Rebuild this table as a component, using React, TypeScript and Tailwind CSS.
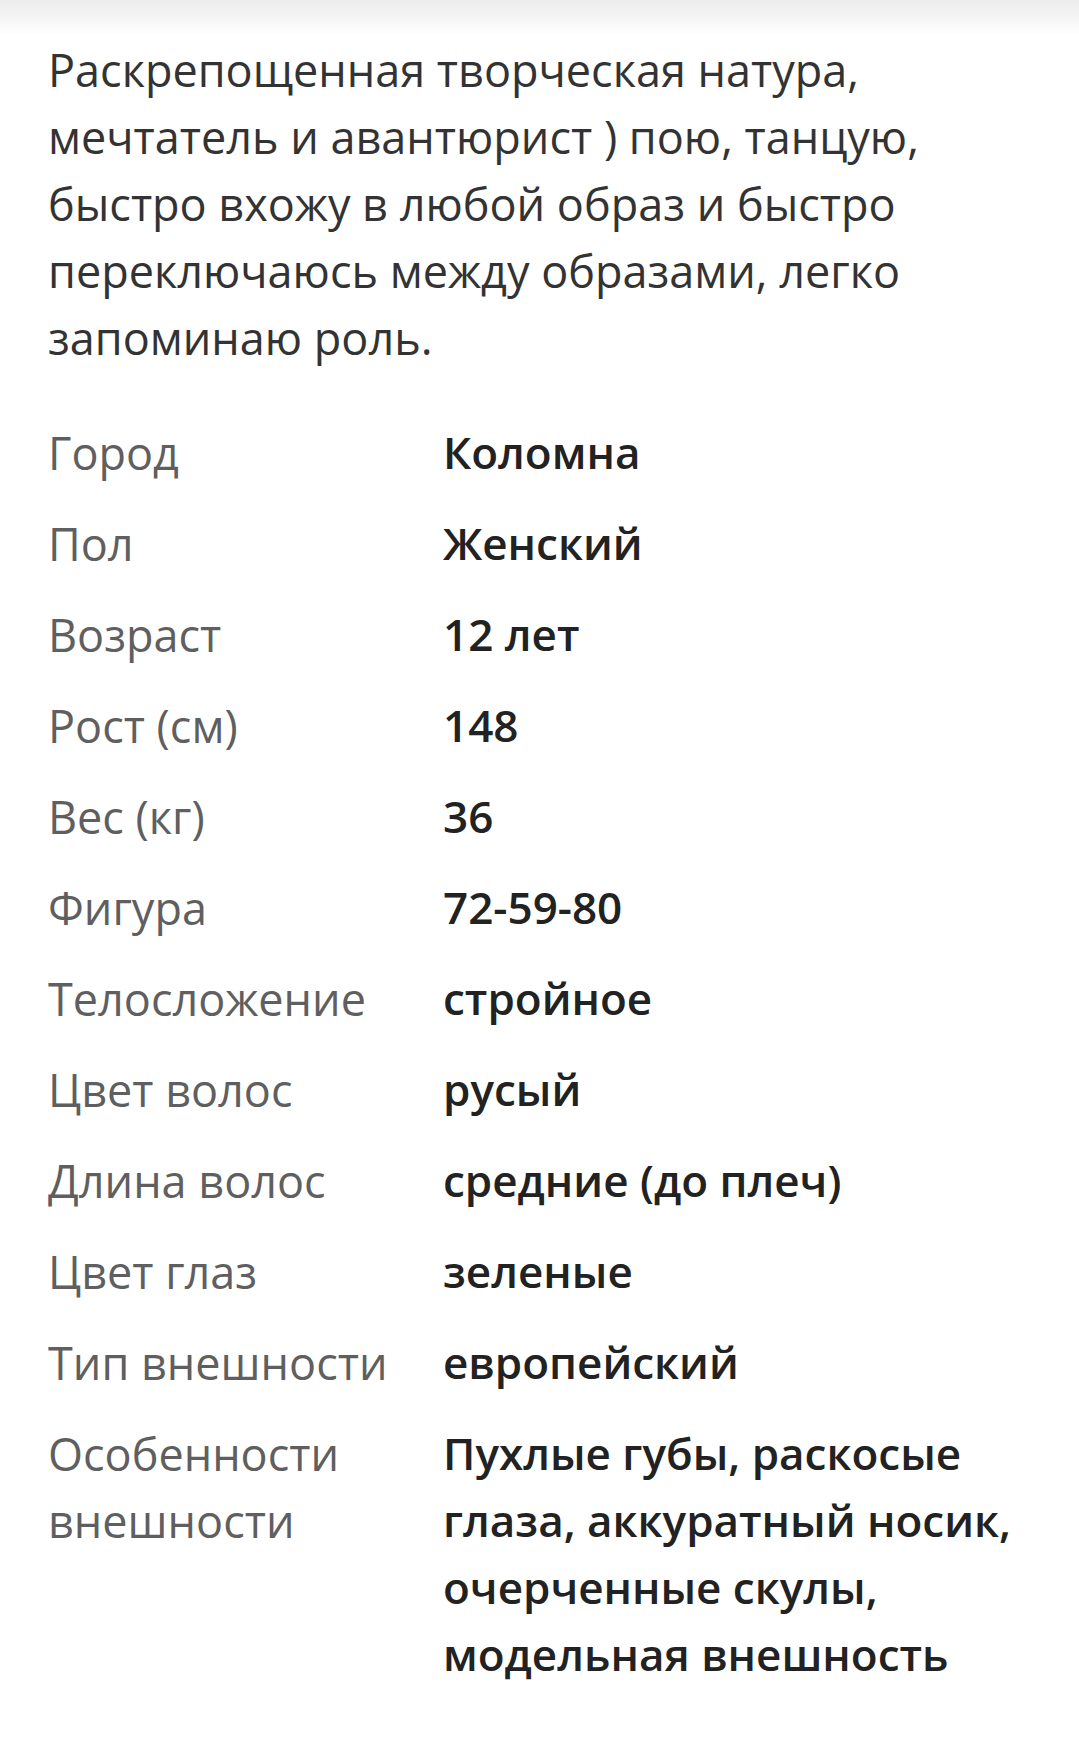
import React from 'react';

const rows: { label: string; value: string }[] = [
  { label: 'Город', value: 'Коломна' },
  { label: 'Пол', value: 'Женский' },
  { label: 'Возраст', value: '12 лет' },
  { label: 'Рост (см)', value: '148' },
  { label: 'Вес (кг)', value: '36' },
  { label: 'Фигура', value: '72-59-80' },
  { label: 'Телосложение', value: 'стройное' },
  { label: 'Цвет волос', value: 'русый' },
  { label: 'Длина волос', value: 'средние (до плеч)' },
  { label: 'Цвет глаз', value: 'зеленые' },
  { label: 'Тип внешности', value: 'европейский' },
  {
    label: 'Особенности внешности',
    value: 'Пухлые губы, раскосые глаза, аккуратный носик, очерченные скулы, модельная внешность',
  },
];

export default function App() {
  return (
    <div className="min-h-[1753px] bg-white" style={{ fontFamily: '"Open Sans", "Noto Sans", sans-serif' }}>
      <div className="h-[36px] bg-gradient-to-b from-[#ececec] to-white" />
      <div className="px-[48px]">
        <p className="text-[45px] leading-[67px] text-[#333]">
          Раскрепощенная творческая натура, мечтатель и авантюрист ) пою, танцую, быстро вхожу в любой образ и быстро
          переключаюсь между образами, легко запоминаю роль.
        </p>

        <div className="mt-[48px] flex flex-col gap-[24px]">
          {rows.map((row) => (
            <div key={row.label} className="flex leading-[67px]">
              <div className="w-[395px] shrink-0 text-[45px] text-[#5f5f5f] pr-[20px]">{row.label}</div>
              <div className="flex-1 text-[44px] font-semibold text-[#222]">{row.value}</div>
            </div>
          ))}
        </div>
      </div>
    </div>
  );
}
